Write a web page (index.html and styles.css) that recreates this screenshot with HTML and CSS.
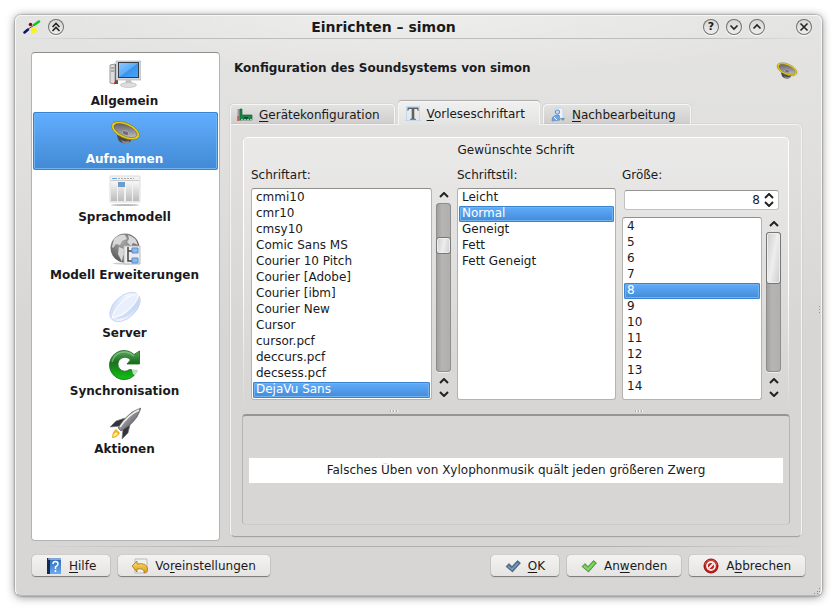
FILE: index.html
```html
<!DOCTYPE html>
<html lang="de">
<head>
<meta charset="utf-8">
<title>Einrichten – simon</title>
<link rel="stylesheet" href="styles.css">
</head>
<body>
<svg class="defs" width="0" height="0" aria-hidden="true">
  <defs>
    <linearGradient id="cone" x1="0" y1="0" x2="1" y2="1"><stop offset="0" stop-color="#56545a"/><stop offset=".6" stop-color="#9a989e"/><stop offset="1" stop-color="#d8d6da"/></linearGradient>
    <linearGradient id="screen" x1="0" y1="0" x2="1" y2="1"><stop offset="0" stop-color="#8cc8ff"/><stop offset=".5" stop-color="#5cadf8"/><stop offset=".52" stop-color="#3b93ec"/><stop offset="1" stop-color="#48a4f4"/></linearGradient>
    <linearGradient id="paper" x1="0" y1="0" x2="0" y2="1"><stop offset="0" stop-color="#f6f6f6"/><stop offset="1" stop-color="#bcbcbc"/></linearGradient>
    <radialGradient id="globe" cx=".4" cy=".3" r=".75"><stop offset="0" stop-color="#a8a8a8"/><stop offset="1" stop-color="#4c4c4c"/></radialGradient>
    <linearGradient id="lens" x1="0" y1="0" x2="1" y2="1"><stop offset="0" stop-color="#c4d4f2"/><stop offset=".5" stop-color="#f2f6fe"/><stop offset="1" stop-color="#bccff0"/></linearGradient>
    <linearGradient id="green" x1="0" y1="0" x2="0" y2="1"><stop offset="0" stop-color="#5aa860"/><stop offset=".4" stop-color="#1c701e"/><stop offset="1" stop-color="#10c410"/></linearGradient>
    <linearGradient id="steel" x1="0" y1="0" x2="1" y2="1"><stop offset="0" stop-color="#d8d8dc"/><stop offset="1" stop-color="#3c3c44"/></linearGradient>
    <linearGradient id="gold" x1="0" y1="0" x2="0" y2="1"><stop offset="0" stop-color="#ffe070"/><stop offset="1" stop-color="#d89a18"/></linearGradient>
    <linearGradient id="book" x1="0" y1="0" x2="0" y2="1"><stop offset="0" stop-color="#2864b4"/><stop offset="1" stop-color="#6cacf4"/></linearGradient>
    <symbol id="speaker" viewBox="0 0 32 24">
      <path d="M7 14l2 6q5 5 12 1l2-5z" fill="#4a4a4c"/><path d="M11 19q4 3 9 1l-1 3q-3 1-6-1z" fill="#8a8a8c"/>
      <ellipse cx="16" cy="9.500" rx="15.500" ry="7.800" transform="rotate(24 16 9.500)" fill="#ecd01a" stroke="#8c7a10" stroke-width=".7"/>
      <ellipse cx="16" cy="9.500" rx="12.800" ry="5.600" transform="rotate(24 16 9.500)" fill="url(#cone)" stroke="#5a5530" stroke-width=".5"/>
      <ellipse cx="16" cy="12" rx="3.500" ry="2.300" transform="rotate(20 16 12)" fill="#6e6c74" stroke="#bbb9c2" stroke-width=".7"/>
    </symbol>
    <symbol id="up" viewBox="0 0 10 6"><path d="M1 5l4-4 4 4" fill="none" stroke="#222" stroke-width="2"/></symbol>
    <symbol id="down" viewBox="0 0 10 6"><path d="M1 1l4 4 4-4" fill="none" stroke="#222" stroke-width="2"/></symbol>
    <symbol id="check" viewBox="0 0 16 14"><path d="M1 7.500L4 4.500l3 3L12.500 1.500 15.500 4 7.500 13z" fill="currentColor" stroke="#222" stroke-opacity=".5" stroke-width=".8"/><path d="M3 7l4 3.500L13 4" fill="none" stroke="#fff" stroke-opacity=".3" stroke-width="1.500"/></symbol>
  </defs>
</svg>

<div class="window">
  <header class="titlebar">
    <svg class="logo" viewBox="0 0 18 14" width="18" height="14" aria-hidden="true"><path d="M11 5l5-3.500" stroke="#12c41c" stroke-width="2.500" stroke-linecap="round"/><path d="M1.500 12.500L5 9.500" stroke="#10107c" stroke-width="2.500" stroke-linecap="round"/><circle cx="7.500" cy="4.500" r="1.800" fill="#7c0c18"/><path d="M5 9l5-3" stroke="#555"/><path d="M8 8q3-1 6 1v2q-2 3-5 2-2-2-1-5z" fill="#f4f428"/></svg>
    <button class="round" type="button" aria-label="Fenster einrollen"><svg viewBox="0 0 16 16" width="16" height="16"><path d="M4.500 8L8 4.500 11.500 8M4.500 12L8 8.500l3.500 3.500" /></svg></button>
    <h1 class="title">Einrichten – simon</h1>
    <button class="round" type="button" aria-label="Hilfe">?</button>
    <button class="round" type="button" aria-label="Minimieren"><svg viewBox="0 0 16 16" width="16" height="16"><path d="M4.500 6.500L8 10l3.500-3.500"/></svg></button>
    <button class="round" type="button" aria-label="Maximieren"><svg viewBox="0 0 16 16" width="16" height="16"><path d="M4.500 9.500L8 6l3.500 3.500"/></svg></button>
    <button class="round close" type="button" aria-label="Schließen"><svg viewBox="0 0 16 16" width="16" height="16"><path d="M4.500 4.500l7 7M11.500 4.500l-7 7"/></svg></button>
  </header>

  <div class="body">
    <nav class="sidebar">
      <button class="page" type="button">
        <svg viewBox="0 0 32 32" width="32" height="32"><path d="M1 6l5-1v20l-5-1z" fill="#ddd" stroke="#999"/><path d="M6 5h3v20H6z" fill="#555"/><path d="M2 9h3M2 12h3" stroke="#777"/><path d="M5 24h1" stroke="#e33" stroke-width="2"/><path d="M7 2h25v19H7z" fill="#d4d8dc" stroke="#aaa" stroke-width=".6"/><path d="M9 3h21v16H9z" fill="#333d48"/><path d="M10 4h19v14H10z" fill="url(#screen)"/><path d="M17 21h5l1 4h-7z" fill="#c4c4c4"/><ellipse cx="19.500" cy="26" rx="8" ry="2.500" fill="#ddd" stroke="#b4b4b4" stroke-width=".6"/></svg>
        <span>Allgemein</span></button>
      <button class="page current" type="button" aria-current="page"><svg viewBox="0 0 32 32" width="32" height="32"><use href="#speaker" x="1" y="4" width="31" height="24"/></svg><span>Aufnahmen</span></button>
      <button class="page" type="button">
        <svg viewBox="0 0 32 32" width="32" height="32"><ellipse cx="16" cy="30" rx="14" ry="1" fill="#bbb"/><path d="M1 1h30v26H1z" fill="#f2f2f2" stroke="#ddd"/><path d="M2 7h6v19H2zM9 7h6v19H9zM17 7h6v19h-6zM24 7h6v19h-6z" fill="url(#paper)"/><path d="M3 3.500h5" stroke="#69a8dc"/><path d="M9 3.500h16" stroke="#aaa" stroke-dasharray="2 1"/><path d="M2 5.500h28" stroke="#ccc"/><path d="M9 7h7v5H9z" fill="#6c9ccc"/></svg>
        <span>Sprachmodell</span></button>
      <button class="page" type="button">
        <svg viewBox="0 0 32 32" width="32" height="32"><ellipse cx="16" cy="30.500" rx="12" ry="1" fill="#ccc"/><circle cx="16" cy="15" r="14.500" fill="url(#globe)"/><path d="M5 6q6-5 11-4l2 4-5 2-2 4-4-1-3 4-1-1zM19 2q8 2 10 10l-5-2-2 3-4-4 2-3zM10 14l5 2 3 3-4 4-1 6-4-8z" fill="#d8d8d8"/><path d="M15 13h16v18H15z" fill="#ececec" stroke="#bbb"/><path d="M19 14v14h4M19 18h4" fill="none" stroke="#444" stroke-width="1.500"/><path d="M23 15h6v5h-6zM23 25h6v5h-6z" fill="#8cb8f0" stroke="#5a8cd0"/></svg>
        <span>Modell Erweiterungen</span></button>
      <button class="page" type="button">
        <svg viewBox="0 0 32 32" width="32" height="32"><ellipse cx="16" cy="16" rx="18" ry="11" transform="rotate(-43 16 16)" fill="url(#lens)" stroke="#bccdf0" stroke-width=".7"/><path d="M3 27Q5 18 14 10 22 3 30 3q-3 10-11 16-8 7-16 8z" fill="#e9effc" stroke="#fff"/><path d="M6 27q14-3 24-20 2 6-7 14-9 9-17 6z" fill="#c5d5f3" opacity=".75"/></svg>
        <span>Server</span></button>
      <button class="page" type="button">
        <svg viewBox="0 0 32 32" width="32" height="32"><path d="M25 5.500L30.500 2v13H18l3.500-4A7 7 0 1 0 20.500 20.500L28.500 21.500A14.500 14.500 0 1 1 25 5.500z" fill="url(#green)" stroke="#17661b" stroke-width=".8"/><path d="M3 13Q6 2 17 3q5 1 8 4" stroke="#9bd09b" stroke-width="1.500" fill="none" opacity=".6"/><path d="M22 18l9 2-2 8-5-3z" fill="#fff" opacity=".7"/></svg>
        <span>Synchronisation</span></button>
      <button class="page" type="button">
        <svg viewBox="0 0 32 32" width="32" height="32"><path d="M16 11L7 14l-6 6 12-1zM21 18l-2 8-6 6 1-11z" fill="#34343c" stroke="#777" stroke-width=".6"/><path d="M7 22l4 4q-3 5-8 5 0-6 4-9z" fill="#f0b028"/><path d="M7 25l2 2q-2 2-5 3 0-3 3-5z" fill="#fff08a"/><path d="M32 1q-3 1-9 4-9 7-14 16l3 3Q23 18 28 10q3-6 4-9z" fill="url(#steel)" stroke="#555" stroke-width=".6"/><path d="M30 3Q19 8 11 20" stroke="#eee" stroke-width="1.500" fill="none"/></svg>
        <span>Aktionen</span></button>
    </nav>

    <main class="content">
      <div class="heading"><h2>Konfiguration des Soundsystems von simon</h2><svg width="22" height="18" aria-hidden="true"><use href="#speaker"/></svg></div>
      <div class="tabs" role="tablist">
        <button class="tab" type="button" role="tab"><svg viewBox="0 0 16 16" width="16" height="16"><path d="M2 2v12" stroke="#999" stroke-width="3"/><path d="M3 2h2v6h10v5H3z" fill="#1c8444" stroke="#105c2c" stroke-width=".6"/><path d="M4 12.500h11" stroke="#d8c040" stroke-dasharray="2 1"/><path d="M7 10h4v1.500H7z" fill="#234"/><path d="M1 9v5" stroke="#c33"/></svg><span><u>G</u>erätekonfiguration</span></button>
        <button class="tab active" type="button" role="tab" aria-selected="true"><svg viewBox="0 0 16 16" width="16" height="16"><path d="M2 .5h12M1.500 0v15M14.500 0v15M0 14.500h16" stroke="#b6d4f2" stroke-width=".8"/><path d="M2.500 1.500h11V5h-.6l-1-2H9.300v9.500l1.700.5v.7H5V13l1.700-.5V3H4L3 5h-.5z" fill="#606060"/></svg><span><u>V</u>orleseschriftart</span></button>
        <button class="tab" type="button" role="tab"><svg viewBox="0 0 16 16" width="16" height="16"><path d="M5 1h8v12H5z" fill="#eef3fa" stroke="#c5d3e4"/><circle cx="7.500" cy="5" r="2.200" fill="#bcd8f4" stroke="#5d91c8"/><path d="M2 14q-1-4 4-6h3q1 2 1 5z" fill="#74a4da" stroke="#5b8dc4" stroke-width=".7"/><path d="M4 10l3 3" stroke="#fff"/><path d="M10 11h5l-2 3z" fill="#718fab"/></svg><span><u>N</u>achbearbeitung</span></button>
      </div>

      <section class="panel" role="tabpanel">
        <div class="group">
          <h3>Gewünschte Schrift</h3>
          <div class="pickers">
            <div class="picker">
              <label for="family">Schriftart:</label>
              <div class="scroller">
                <select id="family" size="13">
                  <option>cmmi10</option><option>cmr10</option><option>cmsy10</option><option>Comic Sans MS</option><option>Courier 10 Pitch</option><option>Courier [Adobe]</option><option>Courier [ibm]</option><option>Courier New</option><option>Cursor</option><option>cursor.pcf</option><option>deccurs.pcf</option><option>decsess.pcf</option><option selected>DejaVu Sans</option>
                </select>
                <div class="scrollbar">
                  <button type="button" aria-label="Nach oben"><svg width="10" height="6"><use href="#up"/></svg></button>
                  <div class="track middle"><div class="thumb"></div></div>
                  <button type="button" aria-label="Zurück"><svg width="10" height="6"><use href="#up"/></svg></button>
                  <button type="button" aria-label="Nach unten"><svg width="10" height="6"><use href="#down"/></svg></button>
                </div>
              </div>
            </div>
            <div class="picker">
              <label for="style">Schriftstil:</label>
              <div class="scroller">
                <select id="style" size="13"><option>Leicht</option><option selected>Normal</option><option>Geneigt</option><option>Fett</option><option>Fett Geneigt</option></select>
              </div>
            </div>
            <div class="picker">
              <label for="size">Größe:</label>
              <div class="spin">
                <input id="size" type="text" inputmode="numeric" value="8">
                <div class="steps"><button type="button" aria-label="Größer"><svg width="10" height="6"><use href="#up"/></svg></button><button type="button" aria-label="Kleiner"><svg width="10" height="6"><use href="#down"/></svg></button></div>
              </div>
              <div class="scroller">
                <select size="11" aria-label="Schriftgrößen"><option>4</option><option>5</option><option>6</option><option>7</option><option selected>8</option><option>9</option><option>10</option><option>11</option><option>12</option><option>13</option><option>14</option></select>
                <div class="scrollbar">
                  <button type="button" aria-label="Nach oben"><svg width="10" height="6"><use href="#up"/></svg></button>
                  <div class="track"><div class="thumb long"></div></div>
                  <button type="button" aria-label="Zurück"><svg width="10" height="6"><use href="#up"/></svg></button>
                  <button type="button" aria-label="Nach unten"><svg width="10" height="6"><use href="#down"/></svg></button>
                </div>
              </div>
            </div>
          </div>
          <div class="grips" aria-hidden="true"><i></i><i></i></div>
        </div>
        <div class="preview"><input type="text" aria-label="Vorschau" value="Falsches Üben von Xylophonmusik quält jeden größeren Zwerg"></div>
      </section>
    </main>
  </div>

  <footer class="actions">
    <button class="btn" type="button"><svg viewBox="0 0 16 16" width="16" height="16"><path d="M1 0h14v16H1z" fill="url(#book)"/><path d="M1 0h3v16H1z" fill="#142c50"/><path d="M2 1h13" stroke="#dce8f8"/><path d="M7 6q0-2.500 2.500-2.500T12 6q0 1.500-2.500 3v2M9.500 12v2" fill="none" stroke="#fff" stroke-width="1.500"/></svg><span><u>H</u>ilfe</span></button>
    <button class="btn" type="button"><svg viewBox="0 0 16 16" width="16" height="16"><path d="M3 1h12v14H3z" fill="#f0f0ee" stroke="#bbb"/><path d="M0 8l5-5v3q10-2 11 6-1 2-4 3 1-5-7-4v3z" fill="url(#gold)" stroke="#a87410" stroke-width=".8"/></svg><span>Vo<u>r</u>einstellungen</span></button>
    <button class="btn ok" type="button"><svg class="blue" width="16" height="14"><use href="#check"/></svg><span><u>O</u>K</span></button>
    <button class="btn" type="button"><svg class="lime" width="16" height="14"><use href="#check"/></svg><span>An<u>w</u>enden</span></button>
    <button class="btn" type="button"><svg viewBox="0 0 16 16" width="16" height="16"><circle cx="8" cy="8" r="7" fill="#c81c14" stroke="#8c0c0c"/><circle cx="8" cy="8" r="4" fill="none" stroke="#eee" stroke-width="1.800"/><path d="M5.500 10.500l5-5" stroke="#eee" stroke-width="1.800"/><path d="M2 7q1-5 6-5t6 5" fill="none" stroke="#fff" opacity=".25"/></svg><span>A<u>b</u>brechen</span></button>
  </footer>
  <svg class="corner" width="8" height="8" aria-hidden="true"><path d="M6 1h1v1H6zM4 4h1v1H4zM6 4h1v1H6zM1 6h1v1H1zM4 6h1v1H4z" fill="#888"/></svg>
  <svg class="edge" width="3" height="9" aria-hidden="true"><path d="M1 0h1v1H1zM1 3h1v1H1zM1 6h1v1H1z" fill="#999"/></svg>
</div>
</body>
</html>
```
FILE: styles.css
```css
* { box-sizing: border-box; }
body {
  margin: 0;
  padding: 15px;
  background: #fff;
  color: #1a1a1c;
  font: 12px/16px "DejaVu Sans", sans-serif;
}
h1, h2, h3 { margin: 0; font-size: inherit; }
button, input, select { font: inherit; color: inherit; margin: 0; }
button { padding: 0; border: 0; background: none; }
svg { display: block; flex: none; }
u { text-underline-offset: 2px; text-decoration-thickness: 1px; text-decoration-skip-ink: none; }
.defs { position: absolute; }

.window {
  position: relative;
  display: flex;
  flex-direction: column;
  min-height: calc(100vh - 30px);
  border: 1px solid #f6f6f6;
  border-bottom-color: #b8b8b8;
  border-radius: 6px;
  background:
    radial-gradient(ellipse 400px 60px at 50% 0, rgba(255, 255, 255, .35), rgba(255, 255, 255, 0)),
    linear-gradient(#e4e4e3, #e0dfde 25%, #d7d6d4 55%);
  box-shadow: 0 0 2px rgba(0, 0, 0, .55), 0 1px 10px rgba(0, 0, 0, .45);
}

.titlebar {
  display: flex;
  align-items: center;
  gap: 7px;
  height: 23px;
  padding: 0 9px 0 7px;
  border-bottom: 1px solid;
  border-image: linear-gradient(90deg, transparent, #bdbdbc 15%, #bdbdbc 85%, transparent) 1;
}
.title { flex: 1; text-align: center; font-size: 14px; }
.round {
  display: flex;
  align-items: center;
  justify-content: center;
  width: 16px;
  height: 16px;
  border-radius: 50%;
  background: linear-gradient(#d6d6d5, #f0f0f0);
  box-shadow: inset 0 0 0 1px #727272, 0 1px 1px #fff;
  font-size: 11px;
  font-weight: bold;
}
.round path { fill: none; stroke: #222; stroke-width: 1.6; }
.close { margin-left: 24px; }

.body {
  flex: 1;
  display: grid;
  grid-template-columns: 189px minmax(0, 1fr);
  gap: 10px;
  padding: 13px 19px 5px 15px;
}
.sidebar {
  padding: 1px;
  border: 1px solid #b4b3b2;
  border-top-color: #8e8e8d;
  border-radius: 4px;
  background: #fff;
}
.page {
  display: flex;
  flex-direction: column;
  align-items: center;
  justify-content: space-between;
  width: 100%;
  height: 58px;
  padding: 5px 2px 3px 0;
  font-weight: bold;
}
.current {
  border-radius: 3px;
  background: linear-gradient(#62aeff, #4189d3);
  box-shadow: inset 0 0 0 1px #3a83ce, inset 0 0 0 2px #70b2f2;
  color: #fff;
}

.content { display: flex; flex-direction: column; min-width: 0; padding-bottom: 4px; }
.heading {
  display: flex;
  align-items: center;
  justify-content: space-between;
  height: 32px;
  padding: 0 4px;
}
.heading svg { margin-top: 6px; }
.tabs { display: flex; align-items: flex-end; gap: 3px; height: 40px; }
.tab {
  display: flex;
  align-items: center;
  gap: 6px;
  height: 20px;
  padding: 0 14px 0 6px;
  border: 1px solid #f6f6f6;
  border-bottom: 0;
  border-radius: 4px 4px 0 0;
  background: linear-gradient(#e2e2e1, #cfcecd);
  box-shadow: 0 0 1px #888;
}
.tab.active {
  position: relative;
  height: 24px;
  margin-bottom: -1px;
  background: linear-gradient(#f0f0f0, #e3e3e2);
  box-shadow: 0 -1px 1px #aaa;
}
.panel {
  flex: 1;
  display: flex;
  flex-direction: column;
  padding: 12px 11px 11px;
  border: 1px solid #f4f4f4;
  border-bottom-color: #a3a3a2;
  border-radius: 0 5px 5px 5px;
  box-shadow: 0 0 1px #888;
}
.group {
  position: relative;
  margin: 0 1px;
  padding: 5px 8px 0;
  border-radius: 5px;
  background: linear-gradient(rgba(255, 255, 255, .3), rgba(255, 255, 255, 0));
}
.group::before {
  content: "";
  position: absolute;
  inset: 0;
  border: 1px solid #fff;
  border-bottom: 0;
  border-radius: 5px 5px 0 0;
  box-shadow: 0 0 1px #999;
  mask-image: linear-gradient(#000 50%, transparent);
  pointer-events: none;
}
.group h3 { font-weight: normal; text-align: center; }
.pickers {
  display: grid;
  grid-template-columns: 200fr 159fr 159fr;
  gap: 6px;
  padding-top: 9px;
}
.picker { display: flex; flex-direction: column; min-width: 0; }
.picker label { height: 21px; }
.scroller { flex: 1; display: flex; gap: 4px; }
select {
  flex: 1;
  min-width: 0;
  height: auto;
  padding: 1px;
  overflow: hidden;
  border: 1px solid #b4b3b2;
  border-top-color: #8e8e8d;
  border-radius: 3px;
  outline: 0;
  background: #fff;
}
option { height: 16px; min-height: 16px; padding: 0 3px; line-height: 16px; }
option:checked {
  border-radius: 2px;
  background: linear-gradient(#62aeff, #4189d3);
  box-shadow: inset 0 0 0 1px #3a83ce, inset 0 0 0 2px #70b2f2;
  color: #fff;
}
.scrollbar { display: flex; flex-direction: column; width: 15px; }
.scrollbar button { display: grid; place-items: center; height: 13px; }
.track {
  flex: 1;
  margin: 2px 0;
  border-radius: 4px;
  background: linear-gradient(90deg, #9c9b9a, #b6b5b4 40%, #b0afae);
  box-shadow: inset 0 0 0 1px #8f8e8d, 0 1px 0 #f0f0f0;
}
.middle { padding-top: 34px; }
.thumb {
  height: 17px;
  border: 1px solid #777;
  border-radius: 3px;
  background: linear-gradient(100deg, #ccc, #eee 50%, #ccc);
  box-shadow: inset 0 0 0 1px #eee;
}
.long { height: 52px; }
.spin {
  display: flex;
  margin: 2px 2px 7px;
  height: 20px;
  padding-right: 4px;
  border: 1px solid #c4c3c2;
  border-top-color: #949493;
  border-radius: 3px;
  background: #fff;
}
.spin input { flex: 1; min-width: 0; padding: 0 4px; border: 0; background: none; text-align: right; }
.steps { display: flex; flex-direction: column; justify-content: center; gap: 2px; }
.grips { display: flex; justify-content: space-around; padding: 10px 20px 0; height: 14px; }
.grips i { width: 8px; height: 2px; background: repeating-linear-gradient(90deg, #aaa 0 1px, #f4f4f4 1px 2px, transparent 2px 3px); }
.preview {
  flex: 1;
  display: flex;
  align-items: center;
  padding: 0 6px;
  border: 1px solid #b6b5b4;
  border-top: 2px solid #969594;
  border-bottom-color: #cccbca;
  border-radius: 4px;
}
.preview input { width: 100%; height: 25px; padding: 0; border: 0; background: #fff; text-align: center; }

.actions {
  display: flex;
  gap: 8px;
  margin: 0 16px 19px;
  padding-top: 8px;
  border-top: 1px solid;
  border-image: linear-gradient(90deg, transparent, #b0b0af 25%, #b0b0af 75%, transparent) 1;
}
.btn {
  display: flex;
  align-items: center;
  gap: 7px;
  height: 21px;
  padding: 0 14px;
  border-radius: 4px;
  background: linear-gradient(#f3f3f2, #e5e4e3);
  box-shadow: 0 0 1px #777, 0 1px 1px #777;
}
.ok { margin-left: auto; }
.blue { color: #4c7098; }
.lime { color: #5cc43c; }
.corner { position: absolute; right: 0; bottom: 0; }
.edge { position: absolute; right: 0; top: 50%; }
```
